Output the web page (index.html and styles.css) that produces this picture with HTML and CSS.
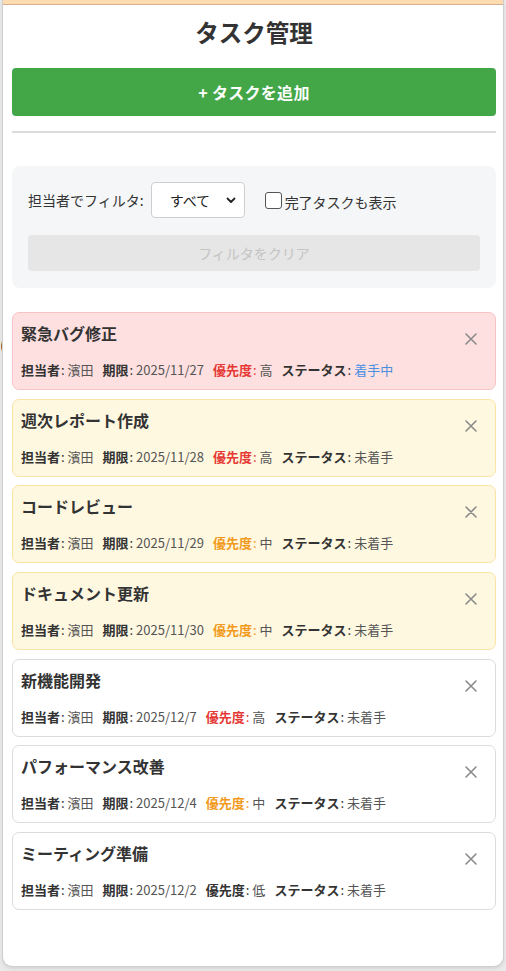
FILE: index.html
```html
<!DOCTYPE html>
<html lang="ja">
<head>
<meta charset="utf-8">
<title>タスク管理</title>
<link rel="stylesheet" href="styles.css">
</head>
<body>
<span class="bg-glyph">(</span>
<div class="panel">
  <div class="top-strip"></div>
  <div class="content">
    <h1 class="title">タスク管理</h1>
    <button class="add-btn">+ タスクを追加</button>
    <hr class="divider">
    <section class="filter-box">
      <div class="filter-row">
        <span class="filter-label">担当者でフィルタ:</span>
        <div class="select">
          <span>すべて</span>
          <svg width="10" height="7" viewBox="0 0 10 7"><path d="M1.5 1.5 L5 5 L8.5 1.5" fill="none" stroke="#222" stroke-width="1.8" stroke-linecap="round" stroke-linejoin="round"/></svg>
        </div>
        <label class="check-label"><input type="checkbox" class="check">完了タスクも表示</label>
      </div>
      <button class="clear-btn">フィルタをクリア</button>
    </section>

    <div class="task-list">
      <div class="card card-red">
        <div class="card-body">
          <div class="card-title">緊急バグ修正</div>
          <div class="meta">
            <span><b>担当者</b><i>:</i> 濱田</span>
            <span><b>期限</b><i>:</i> 2025/11/27</span>
            <span><b class="p-high">優先度<i>:</i></b> 高</span>
            <span><b>ステータス</b><i>:</i> <span class="st-active">着手中</span></span>
          </div>
        </div>
        <button class="close"><svg width="12" height="12" viewBox="0 0 12 12"><path d="M1 1 L11 11 M11 1 L1 11" stroke="#8a8a8a" stroke-width="1.6" stroke-linecap="round"/></svg></button>
      </div>

      <div class="card card-yellow">
        <div class="card-body">
          <div class="card-title">週次レポート作成</div>
          <div class="meta">
            <span><b>担当者</b><i>:</i> 濱田</span>
            <span><b>期限</b><i>:</i> 2025/11/28</span>
            <span><b class="p-high">優先度<i>:</i></b> 高</span>
            <span><b>ステータス</b><i>:</i> 未着手</span>
          </div>
        </div>
        <button class="close"><svg width="12" height="12" viewBox="0 0 12 12"><path d="M1 1 L11 11 M11 1 L1 11" stroke="#8a8a8a" stroke-width="1.6" stroke-linecap="round"/></svg></button>
      </div>

      <div class="card card-yellow">
        <div class="card-body">
          <div class="card-title">コードレビュー</div>
          <div class="meta">
            <span><b>担当者</b><i>:</i> 濱田</span>
            <span><b>期限</b><i>:</i> 2025/11/29</span>
            <span><b class="p-mid">優先度<i>:</i></b> 中</span>
            <span><b>ステータス</b><i>:</i> 未着手</span>
          </div>
        </div>
        <button class="close"><svg width="12" height="12" viewBox="0 0 12 12"><path d="M1 1 L11 11 M11 1 L1 11" stroke="#8a8a8a" stroke-width="1.6" stroke-linecap="round"/></svg></button>
      </div>

      <div class="card card-yellow">
        <div class="card-body">
          <div class="card-title">ドキュメント更新</div>
          <div class="meta">
            <span><b>担当者</b><i>:</i> 濱田</span>
            <span><b>期限</b><i>:</i> 2025/11/30</span>
            <span><b class="p-mid">優先度<i>:</i></b> 中</span>
            <span><b>ステータス</b><i>:</i> 未着手</span>
          </div>
        </div>
        <button class="close"><svg width="12" height="12" viewBox="0 0 12 12"><path d="M1 1 L11 11 M11 1 L1 11" stroke="#8a8a8a" stroke-width="1.6" stroke-linecap="round"/></svg></button>
      </div>

      <div class="card">
        <div class="card-body">
          <div class="card-title">新機能開発</div>
          <div class="meta">
            <span><b>担当者</b><i>:</i> 濱田</span>
            <span><b>期限</b><i>:</i> 2025/12/7</span>
            <span><b class="p-high">優先度<i>:</i></b> 高</span>
            <span><b>ステータス</b><i>:</i> 未着手</span>
          </div>
        </div>
        <button class="close"><svg width="12" height="12" viewBox="0 0 12 12"><path d="M1 1 L11 11 M11 1 L1 11" stroke="#8a8a8a" stroke-width="1.6" stroke-linecap="round"/></svg></button>
      </div>

      <div class="card">
        <div class="card-body">
          <div class="card-title">パフォーマンス改善</div>
          <div class="meta">
            <span><b>担当者</b><i>:</i> 濱田</span>
            <span><b>期限</b><i>:</i> 2025/12/4</span>
            <span><b class="p-mid">優先度<i>:</i></b> 中</span>
            <span><b>ステータス</b><i>:</i> 未着手</span>
          </div>
        </div>
        <button class="close"><svg width="12" height="12" viewBox="0 0 12 12"><path d="M1 1 L11 11 M11 1 L1 11" stroke="#8a8a8a" stroke-width="1.6" stroke-linecap="round"/></svg></button>
      </div>

      <div class="card">
        <div class="card-body">
          <div class="card-title">ミーティング準備</div>
          <div class="meta">
            <span><b>担当者</b><i>:</i> 濱田</span>
            <span><b>期限</b><i>:</i> 2025/12/2</span>
            <span><b>優先度</b><i>:</i> 低</span>
            <span><b>ステータス</b><i>:</i> 未着手</span>
          </div>
        </div>
        <button class="close"><svg width="12" height="12" viewBox="0 0 12 12"><path d="M1 1 L11 11 M11 1 L1 11" stroke="#8a8a8a" stroke-width="1.6" stroke-linecap="round"/></svg></button>
      </div>
    </div>
  </div>
</div>
</body>
</html>
```

FILE: styles.css
```css
* { box-sizing: border-box; }

html, body {
  margin: 0;
  padding: 0;
}

body {
  background: #e9e9e9;
  font-family: "Noto Sans CJK JP", "Noto Sans", sans-serif;
  color: #333;
  height: 971px;
  overflow: hidden;
  position: relative;
}

.bg-glyph {
  position: absolute;
  left: 0;
  top: 334px;
  font-size: 15px;
  color: #222;
}

.panel {
  position: relative;
  margin-left: 3px;
  width: 500px;
  height: 966px;
  background: #fff;
  border-radius: 0 0 9px 9px;
  box-shadow: 0 0 0 1px #cfcfcf, 0 2px 4px rgba(0,0,0,0.12);
}

.top-strip {
  height: 5px;
  background: #ffdcb0;
  border-bottom: 1px solid #d6b08c;
}

.content {
  padding: 12px 7px 0 9px;
  display: flex;
  flex-direction: column;
}

.title {
  margin: 0;
  font-size: 23.5px;
  line-height: 31px;
  font-weight: 700;
  text-align: center;
  color: #333;
}

.add-btn {
  margin-top: 20px;
  height: 48px;
  border: none;
  border-radius: 4px;
  background: #43a647;
  color: #fff;
  font-family: inherit;
  font-size: 16px;
  font-weight: 700;
  letter-spacing: 0.3px;
}

.divider {
  margin: 15px 0 0;
  border: none;
  height: 2px;
  background: #dcdcdc;
}

.filter-box {
  margin-top: 33px;
  background: #f5f6f8;
  border-radius: 8px;
  padding: 16px 16px 17px;
  display: flex;
  flex-direction: column;
  gap: 17px;
}

.filter-row {
  display: flex;
  align-items: center;
  height: 36px;
}

.filter-label {
  font-size: 14px;
  color: #333;
  margin-right: 7px;
}

.select {
  width: 94px;
  height: 36px;
  background: #fff;
  border: 1px solid #cfcfcf;
  border-radius: 4px;
  display: flex;
  align-items: center;
  justify-content: space-between;
  padding: 0 8px 0 18px;
  font-size: 14px;
  color: #222;
}

.check-label {
  margin-left: 20px;
  display: flex;
  align-items: center;
  font-size: 14px;
  color: #333;
  padding-top: 4px;
}

.check {
  appearance: none;
  -webkit-appearance: none;
  width: 17px;
  height: 17px;
  margin: 0 3px 0 0;
  border: 1px solid #555;
  border-radius: 3px;
  background: #fff;
  position: relative;
  top: -2px;
}

.clear-btn {
  height: 36px;
  border: none;
  border-radius: 4px;
  background: #e6e6e6;
  color: #c4c4c4;
  font-family: inherit;
  font-size: 14px;
}

.task-list {
  margin-top: 24px;
  display: flex;
  flex-direction: column;
  gap: 8.7px;
}

.card {
  height: 78px;
  border: 1px solid #dcdcdc;
  border-radius: 7px;
  background: #fff;
  display: flex;
  justify-content: space-between;
  align-items: flex-start;
  padding: 9px 12px 9px 8px;
}

.card-red {
  background: #ffe0e0;
  border-color: #f8c4c4;
}

.card-yellow {
  background: #fff8e1;
  border-color: #fbe3a6;
}

.card-title {
  font-size: 16px;
  line-height: 22px;
  font-weight: 700;
  color: #333;
}

.meta {
  margin-top: 17px;
  display: flex;
  gap: 9px;
  font-size: 13px;
  line-height: 18px;
  color: #555;
}

.meta b {
  color: #333;
  font-weight: 700;
}

.meta i {
  font-style: normal;
  font-weight: 400;
  color: #333;
  margin-left: 1px;
}

.meta b.p-high { color: #e53935; }
.meta b.p-mid { color: #f29a1c; }
.meta b.p-high i, .meta b.p-mid i { color: inherit; }

.st-active { color: #4a8fe0; }

.close {
  width: 24px;
  height: 24px;
  margin-top: 5px;
  padding: 0;
  border: none;
  background: transparent;
  display: flex;
  align-items: center;
  justify-content: center;
}
```
